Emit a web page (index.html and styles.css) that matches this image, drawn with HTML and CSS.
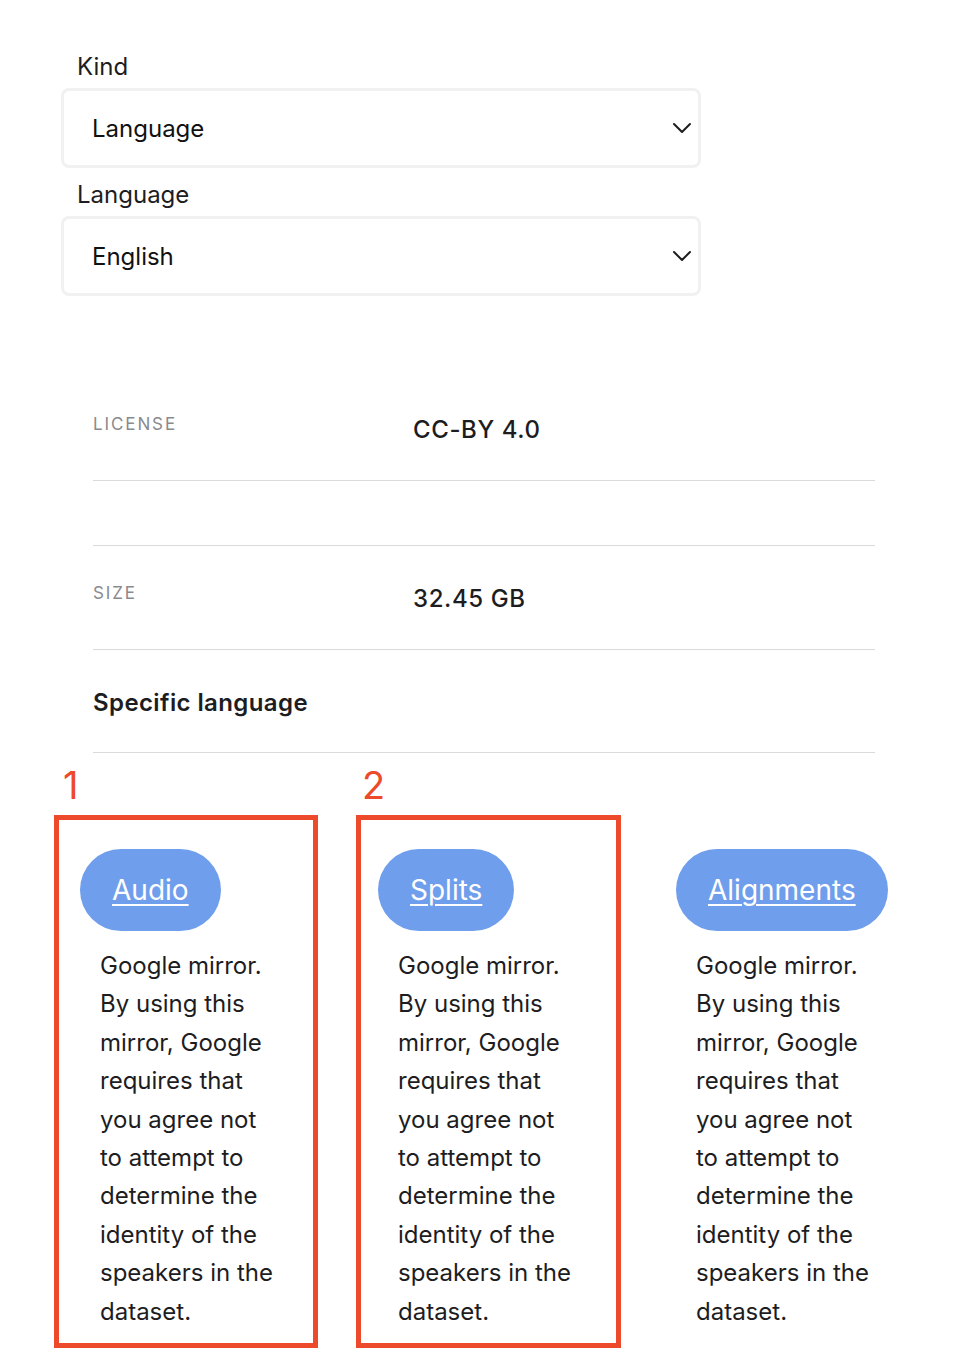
FILE: index.html
```html
<!DOCTYPE html>
<html lang="en">
<head>
<meta charset="utf-8">
<title>Dataset</title>
<link rel="stylesheet" href="styles.css">
</head>
<body>
<div class="form">
  <label class="field-label">Kind</label>
  <div class="select">
    <span class="select-value">Language</span>
    <svg class="chevron" width="20" height="12" viewBox="0 0 20 12"><polyline points="2,2 10,10 18,2" fill="none" stroke="#1d1d1f" stroke-width="2" stroke-linecap="round" stroke-linejoin="round"/></svg>
  </div>
  <label class="field-label second">Language</label>
  <div class="select">
    <span class="select-value">English</span>
    <svg class="chevron" width="20" height="12" viewBox="0 0 20 12"><polyline points="2,2 10,10 18,2" fill="none" stroke="#1d1d1f" stroke-width="2" stroke-linecap="round" stroke-linejoin="round"/></svg>
  </div>
</div>

<div class="details">
  <div class="row">
    <div class="row-label">LICENSE</div>
    <div class="row-value">CC-BY 4.0</div>
  </div>
  <div class="row empty"></div>
  <div class="row">
    <div class="row-label">SIZE</div>
    <div class="row-value">32.45 GB</div>
  </div>
  <div class="row heading-row">
    <div class="row-heading">Specific language</div>
  </div>
</div>

<div class="cards">
  <div class="col">
    <a class="pill" href="#">Audio</a>
    <p class="desc">Google mirror. By using this mirror, Google requires that you agree not to attempt to determine the identity of the speakers in the dataset.</p>
    <div class="annot annot-1"><span class="annot-num num-1">1</span></div>
  </div>
  <div class="col">
    <a class="pill" href="#">Splits</a>
    <p class="desc">Google mirror. By using this mirror, Google requires that you agree not to attempt to determine the identity of the speakers in the dataset.</p>
    <div class="annot annot-2"><span class="annot-num">2</span></div>
  </div>
  <div class="col">
    <a class="pill" href="#">Alignments</a>
    <p class="desc">Google mirror. By using this mirror, Google requires that you agree not to attempt to determine the identity of the speakers in the dataset.</p>
  </div>
</div>
</body>
</html>
```

FILE: styles.css
```css
* { box-sizing: border-box; }

body {
  margin: 0;
  background: #ffffff;
  font-family: Inter, "Noto Sans", "Liberation Sans", sans-serif;
  color: #1d1d1f;
}

.form {
  margin-left: 61px;
  width: 640px;
  padding-top: 52px;
}

.field-label {
  display: block;
  padding-left: 16px;
  font-size: 24px;
  line-height: 30px;
  color: #1d1d1f;
  margin-bottom: 6px;
}

.field-label.second {
  margin-top: 12px;
}

.select {
  height: 80px;
  border: 3px solid #f1f1f1;
  border-radius: 8px;
  display: flex;
  align-items: center;
  justify-content: space-between;
  padding: 0 6px 0 28px;
}

.select-value {
  font-size: 24px;
  color: #111;
}

.chevron { display: block; }

.details {
  margin-left: 93px;
  width: 782px;
  margin-top: 81px;
}

.row {
  display: grid;
  grid-template-columns: 320px 1fr;
  align-items: start;
  padding: 35px 0 32px;
  border-bottom: 1px solid #dadada;
}

.row.empty {
  height: 65px;
  padding: 0;
}

.row.heading-row {
  padding: 35px 0 31px;
}

.row-label {
  font-size: 17px;
  line-height: 24px;
  letter-spacing: 1.9px;
  color: #8a8a8e;
}

.row-value {
  font-size: 24px;
  line-height: 36px;
  font-weight: 500;
  letter-spacing: 0.6px;
  color: #1d1d1f;
}

.row-heading {
  grid-column: 1 / -1;
  font-size: 24px;
  line-height: 36px;
  font-weight: 600;
  letter-spacing: 0.4px;
  color: #1d1d1f;
}

.cards {
  margin: 96px 0 0 80px;
  padding-bottom: 60px;
  display: grid;
  grid-template-columns: 298px 298px auto;
  align-items: start;
}

.col {
  position: relative;
}

.pill {
  display: inline-block;
  height: 82px;
  line-height: 82px;
  padding: 0 32px;
  border-radius: 41px;
  background: #6f9eec;
  color: #ffffff;
  font-size: 28px;
  text-decoration: underline;
  text-decoration-thickness: 2px;
  text-underline-offset: 4px;
}

.desc {
  margin: 16px 0 0 20px;
  width: 180px;
  font-size: 24px;
  line-height: 38.4px;
  color: #1d1d1f;
}

.annot {
  position: absolute;
  top: -34px;
  bottom: -17px;
  width: 264px;
  border: 5px solid #ec4a2b;
  pointer-events: none;
}

.annot-1 { left: -26px; }
.annot-2 { left: -22px; width: 265px; }

.annot-num {
  position: absolute;
  top: -54px;
  left: 1px;
  font-family: Inter, "Liberation Sans", sans-serif;
  font-size: 38px;
  line-height: 38px;
  color: #ec4a2b;
}

.annot-num.num-1 { left: 4px; }
```
